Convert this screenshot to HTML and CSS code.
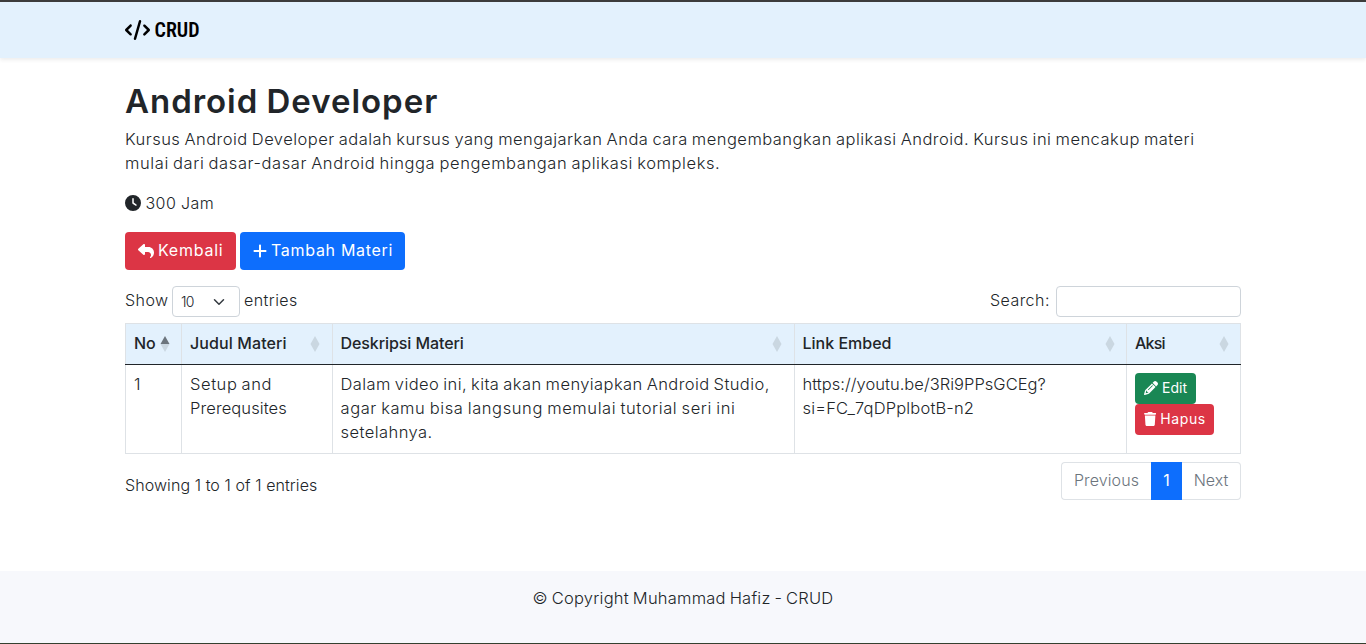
FILE: index.html
```html
<!DOCTYPE html>
<html lang="id">
<head>
<meta charset="utf-8">
<title>Android Developer - CRUD</title>
<link rel="stylesheet" href="styles.css">
</head>
<body>
<nav class="navbar">
  <div class="container brand">
    <svg class="icon-code" viewBox="0 0 640 512"><path d="M392.8 1.2c-17-4.9-34.7 5-39.6 22l-128 448c-4.9 17 5 34.7 22 39.6s34.7-5 39.6-22l128-448c4.9-17-5-34.7-22-39.6zm80.6 120.1c-12.5 12.5-12.5 32.8 0 45.3L562.7 256l-89.4 89.4c-12.5 12.5-12.5 32.8 0 45.3s32.8 12.5 45.3 0l112-112c12.5-12.5 12.5-32.8 0-45.3l-112-112c-12.5-12.5-32.8-12.5-45.3 0zm-306.7 0c-12.5-12.5-32.8-12.5-45.3 0l-112 112c-12.5 12.5-12.5 32.8 0 45.3l112 112c12.5 12.5 32.8 12.5 45.3 0s12.5-32.8 0-45.3L77.3 256l89.4-89.4c12.5-12.5 12.5-32.8 0-45.3z"/></svg>
    <span class="brand-name">CRUD</span>
  </div>
</nav>
<main class="container content">
  <h1 class="title">Android Developer</h1>
  <p class="lead"><span class="lead-a">Kursus Android Developer adalah kursus yang mengajarkan Anda cara mengembangkan aplikasi Android. Kursus ini mencakup materi</span><br><span class="lead-b">mulai dari dasar-dasar Android hingga pengembangan aplikasi kompleks.</span></p>
  <p class="duration"><svg class="icon" viewBox="0 0 512 512"><path d="M256 0a256 256 0 1 1 0 512A256 256 0 1 1 256 0zM232 120V256c0 8 4 15.5 10.7 20l96 64c11 7.4 25.9 4.4 33.3-6.7s4.4-25.9-6.7-33.3L280 243.2V120c0-13.3-10.7-24-24-24s-24 10.7-24 24z"/></svg><span>300 Jam</span></p>
  <div class="actions">
    <button class="btn btn-danger btn-back"><svg class="icon" viewBox="0 0 512 512"><path d="M205 34.8c11.5 5.1 19 16.6 19 29.2v64H336c97.2 0 176 78.8 176 176c0 113.3-81.5 163.9-100.2 174.1c-2.5 1.4-5.3 1.9-8.1 1.9c-10.9 0-19.7-8.9-19.7-19.7c0-7.5 4.3-14.4 9.8-19.5c9.4-8.8 22.2-26.4 22.2-56.7c0-53-43-96-96-96H224v64c0 12.6-7.4 24.1-19 29.2s-25 3-34.4-5.4l-160-144C3.9 225.7 0 217.1 0 208s3.9-17.7 10.6-23.8l160-144c9.4-8.5 22.9-10.6 34.4-5.4z"/></svg><span>Kembali</span></button>
    <button class="btn btn-primary btn-add"><svg class="icon-narrow" viewBox="0 0 448 512"><path d="M256 80c0-17.7-14.3-32-32-32s-32 14.3-32 32V224H48c-17.7 0-32 14.3-32 32s14.3 32 32 32H192V432c0 17.7 14.3 32 32 32s32-14.3 32-32V288H400c17.7 0 32-14.3 32-32s-14.3-32-32-32H256V80z"/></svg><span>Tambah Materi</span></button>
  </div>
  <div class="controls">
    <div class="length"><span class="w-show">Show</span>
      <div class="select"><span>10</span><svg class="chevron" viewBox="0 0 16 16"><path d="m2 5 6 6 6-6"/></svg></div>
      <span class="w-entries">entries</span></div>
    <div class="filter"><span class="w-search">Search:</span><input class="search" type="text"></div>
  </div>
  <table class="table">
    <colgroup><col class="c1"><col class="c2"><col class="c3"><col class="c4"><col class="c5"></colgroup>
    <thead><tr>
      <th><div class="head"><span class="h-no">No</span><svg class="sort asc" viewBox="0 0 10 18"><path class="up" d="M5 1 9.5 9h-9z"/><path d="M.5 9h9L5 17z"/></svg></div></th>
      <th><div class="head"><span class="h-judul">Judul Materi</span><svg class="sort" viewBox="0 0 10 18"><path d="M5 1 9.5 9 5 17 .5 9z"/></svg></div></th>
      <th><div class="head"><span class="h-desk">Deskripsi Materi</span><svg class="sort" viewBox="0 0 10 18"><path d="M5 1 9.5 9 5 17 .5 9z"/></svg></div></th>
      <th><div class="head"><span class="h-link">Link Embed</span><svg class="sort sort-link" viewBox="0 0 10 18"><path d="M5 1 9.5 9 5 17 .5 9z"/></svg></div></th>
      <th><div class="head"><span class="h-aksi">Aksi</span><svg class="sort sort-link" viewBox="0 0 10 18"><path d="M5 1 9.5 9 5 17 .5 9z"/></svg></div></th>
    </tr></thead>
    <tbody><tr>
      <td>1</td>
      <td><span class="t-setup">Setup and</span><br><span class="t-pre">Prerequsites</span></td>
      <td><span class="t-d1">Dalam video ini, kita akan menyiapkan Android Studio,</span><br><span class="t-d2">agar kamu bisa langsung memulai tutorial seri ini</span><br><span class="t-d3">setelahnya.</span></td>
      <td><span class="t-l1">https://youtu.be/3Ri9PPsGCEg?</span><br><span class="t-l2">si=FC_7qDPplbotB-n2</span></td>
      <td><div class="row-actions">
        <button class="btn btn-sm btn-success btn-edit"><svg class="icon" viewBox="0 0 512 512"><path d="M410.3 231l11.3-11.3-33.9-33.9-62.1-62.1L291.7 89.8l-11.3 11.3-22.6 22.6L58.6 322.9c-10.4 10.4-18 23.3-22.2 37.4L1 480.7c-2.5 8.4-.2 17.5 6.1 23.7s15.3 8.5 23.7 6.1l120.3-35.4c14.1-4.2 27-11.8 37.4-22.2L387.7 253.7 410.3 231zM160 399.4l-9.1 22.7c-4 3.1-8.5 5.4-13.3 6.9L59.4 452l23-78.1c1.4-4.9 3.8-9.4 6.9-13.3l22.7-9.1v32c0 8.8 7.2 16 16 16h32zM362.7 18.7L348.3 33.2 325.7 55.8 314.3 67.1l33.9 33.9 62.1 62.1 33.9 33.9 11.3-11.3 22.6-22.6 14.5-14.5c25-25 25-65.5 0-90.5L453.3 18.7c-25-25-65.5-25-90.5 0zm-47.4 168l-144 144c-6.2 6.2-16.4 6.2-22.6 0s-6.2-16.4 0-22.6l144-144c6.2-6.2 16.4-6.2 22.6 0s6.2 16.4 0 22.6z"/></svg><span>Edit</span></button>
        <button class="btn btn-sm btn-danger btn-del"><svg class="icon-narrow" viewBox="0 0 448 512"><path d="M135.2 17.7L128 32H32C14.3 32 0 46.3 0 64S14.3 96 32 96H416c17.7 0 32-14.3 32-32s-14.3-32-32-32H320l-7.2-14.3C307.4 6.8 296.3 0 284.2 0H163.8c-12.1 0-23.2 6.8-28.6 17.7zM416 128H32L53.2 467c1.6 25.3 22.6 45 47.9 45H346.9c25.3 0 46.3-19.7 47.9-45L416 128z"/></svg><span>Hapus</span></button>
      </div></td>
    </tr></tbody>
  </table>
  <div class="table-footer">
    <span class="info">Showing 1 to 1 of 1 entries</span>
    <div class="pagination"><span class="page prev"><span>Previous</span></span><span class="page active">1</span><span class="page next"><span>Next</span></span></div>
  </div>
</main>
<footer class="footer"><span>© Copyright Muhammad Hafiz - CRUD</span></footer>
</body>
</html>
```
FILE: styles.css
```css
* { box-sizing: border-box; }
body {
  margin: 0;
  height: 644px;
  display: flex;
  flex-direction: column;
  overflow: hidden;
  border-top: 2px solid #3c3c3c;
  border-bottom: 1px solid #35402f;
  background: #fff;
  color: #212529;
  font: 300 16px/24px Inter, "Open Sans", sans-serif;
  white-space: nowrap;
}
svg { fill: currentColor; flex: none; display: block; }
p { margin: 0 0 16px; }
.container { width: 1116px; margin: 0 auto 0 125px; }
.navbar {
  height: 56px;
  flex: none;
  display: flex;
  align-items: center;
  background: #e3f1fd;
  box-shadow: 0 2px 4px rgba(0, 0, 0, .075);
}
.brand { display: flex; align-items: center; gap: 4.5px; color: #000; }
.icon-code { width: 25px; height: 20px; }
.brand-name { font: 600 20px/30px Roboto, sans-serif; font-stretch: 75%; }
.content { padding-top: 24px; flex: 1; }
.title { margin: 0 0 7px; font-size: 33px; font-weight: 600; line-height: 38px; letter-spacing: .97px; word-spacing: -1px; }
.lead, .table td, .footer { font-size: 16.5px; word-spacing: -1px; }
.lead-a { letter-spacing: .47px; }
.lead-b { letter-spacing: .59px; }
.duration { display: flex; align-items: center; gap: 4.5px; margin-bottom: 17px; letter-spacing: .4px; }
.icon { width: 1em; height: 1em; }
.icon-narrow { width: .875em; height: 1em; }
.actions { display: flex; gap: 4px; margin-bottom: 16px; }
.btn {
  display: flex;
  align-items: center;
  justify-content: flex-start;
  gap: 4px;
  height: 38px;
  padding: 0 13px 1px;
  border: 0;
  border-radius: 4px;
  color: #fff;
  font: 400 16px/24px Inter, sans-serif;
  white-space: nowrap;
}
.btn span { padding-bottom: 1px; }
.btn-danger { background: #dc3545; }
.btn-primary { background: #0d6efd; }
.btn-success { background: #198754; }
.btn-back { width: 111px; letter-spacing: .75px; }
.btn-add { width: 165px; letter-spacing: .7px; }
.controls { display: flex; justify-content: space-between; margin-bottom: 6px; height: 31px; }
.length, .filter { display: flex; align-items: center; letter-spacing: .45px; }
.w-show { width: 47px; padding-bottom: 3px; }
.w-entries { padding-bottom: 3px; }
.select {
  display: flex;
  align-items: center;
  justify-content: space-between;
  width: 68px;
  height: 31px;
  margin-right: 4px;
  padding: 0 14px 0 8px;
  border: 1px solid #ced4da;
  border-radius: 4px;
  font-size: 14px;
  letter-spacing: -.8px;
}
.chevron { width: 12px; height: 12px; fill: none; stroke: #343a40; stroke-width: 2; stroke-linecap: round; stroke-linejoin: round; }
.w-search { width: 66px; padding-bottom: 3px; }
.search { width: 185px; height: 31px; border: 1px solid #ced4da; border-radius: 4px; background: #fff; }
.table { width: 1116px; table-layout: fixed; border-collapse: collapse; }
.c1 { width: 56px; }
.c2 { width: 151px; }
.c3 { width: 462px; }
.c4 { width: 332px; }
.c5 { width: 114px; }
.table th, .table td { border: 1px solid #dee2e6; padding: 7px 8px 9px; text-align: left; vertical-align: top; }
.table th:nth-child(3), .table th:nth-child(4), .table td:nth-child(3), .table td:nth-child(4) { padding-left: 7.5px; }
.table th { background: #e3f1fd; height: 41px; border-bottom-color: #212529; font-weight: 500; }
.table td { height: 89px; }
.head { display: flex; justify-content: space-between; align-items: center; }
.h-judul { letter-spacing: .1px; }
.h-desk { letter-spacing: -.08px; }
.h-aksi { letter-spacing: -.8px; }
.t-setup { letter-spacing: .57px; }
.t-pre { letter-spacing: .1px; }
.t-d1 { letter-spacing: .41px; }
.t-d2 { letter-spacing: .6px; }
.t-d3 { letter-spacing: .44px; }
.t-l1 { letter-spacing: .03px; }
.t-l2 { letter-spacing: .16px; }
.sort { width: 10px; height: 18px; margin: 1px 4px 0 0; fill: #cad7e1; }
.asc { margin-right: 3px; }
.sort-link { margin-right: 3px; }
.up { fill: #6c757d; }
.row-actions { display: flex; flex-direction: column; align-items: flex-start; padding-top: 1px; }
.btn-sm { height: 31px; padding: 0 9px 1px; font-size: 14px; }
.btn-edit { width: 61px; }
.btn-del { width: 79px; letter-spacing: .6px; }
.table-footer { display: flex; justify-content: space-between; padding-top: 8px; }
.info { padding-top: 11px; letter-spacing: .08px; }
.pagination { display: flex; height: 38px; color: #6c757d; }
.page { display: flex; align-items: center; justify-content: center; padding-bottom: 2px; border: 1px solid #dee2e6; }
.prev { width: 90px; border-right: 0; border-radius: 4px 0 0 4px; letter-spacing: .1px; }
.active { width: 31px; background: #0d6efd; border-color: #0d6efd; color: #fff; font-weight: 400; }
.next { width: 59px; border-left: 0; border-radius: 0 4px 4px 0; }
.footer { height: 72px; flex: none; padding-top: 15px; background: #f7f8fc; text-align: center; letter-spacing: .23px; }
```
